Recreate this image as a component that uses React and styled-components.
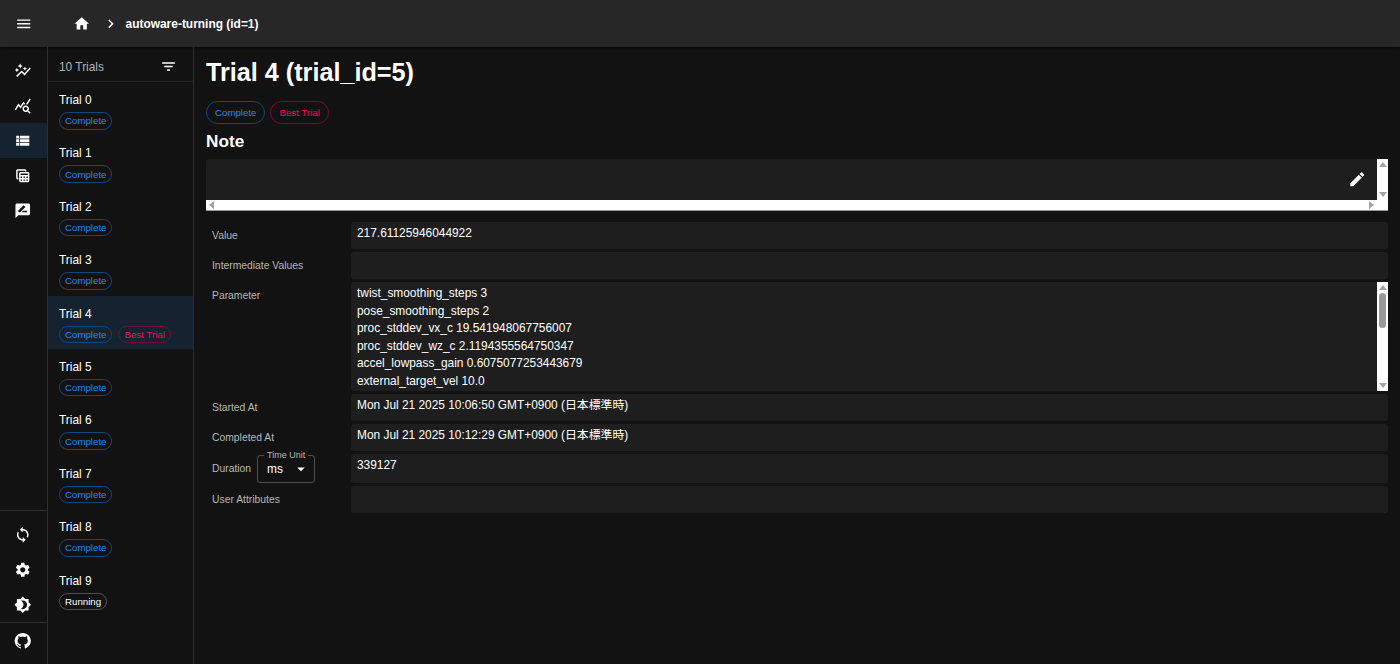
import React from "react";
import styled, { createGlobalStyle } from "styled-components";
import {
  MdAutoGraph,
  MdBrightness4,
  MdChevronRight,
  MdFilterList,
  MdHome,
  MdMenu,
  MdModeEdit,
  MdQueryStats,
  MdRateReview,
  MdSettings,
  MdSync,
  MdTableView,
  MdViewList,
  MdArrowDropDown,
} from "react-icons/md";

const GlobalStyle = createGlobalStyle`
  html, body {
    margin: 0;
    height: 100%;
    background: #121212;
  }
  body {
    font-family: "Liberation Sans", "Noto Sans CJK JP", sans-serif;
    font-size: 11.9px;
    color: #fff;
    overflow: hidden;
  }
  * { box-sizing: border-box; }
`;

const Page = styled.div`
  width: 1400px;
  height: 664px;
  display: flex;
  flex-direction: column;
`;

const AppBar = styled.header`
  height: 47px;
  flex: none;
  display: flex;
  align-items: center;
  background: #272727;
  box-shadow: 0 1px 3px rgba(0, 0, 0, 0.5);
  padding-left: 15px;
`;

const BarIcon = styled.span`
  display: inline-flex;
  color: #fff;
  font-size: ${(p) => p.$size || 17.5}px;
  margin-left: ${(p) => p.$left || 0}px;
`;

const AppTitle = styled.span`
  font-weight: 700;
  font-size: 11.95px;
  margin-left: 6px;
`;

const Body = styled.div`
  flex: 1;
  display: flex;
  min-height: 0;
`;

const SideNav = styled.nav`
  width: 48px;
  flex: none;
  display: flex;
  flex-direction: column;
  border-right: 1px solid #2e2e2e;
  padding-top: 6px;
`;

const NavGroup = styled.div`
  display: flex;
  flex-direction: column;
`;

const NavBottom = styled(NavGroup)`
  margin-top: auto;
  padding-bottom: 6px;
`;

const NavItem = styled.div`
  height: 35px;
  display: flex;
  align-items: center;
  justify-content: center;
  padding-right: 1px;
  color: #fff;
  font-size: 17.5px;
  background: ${(p) => (p.$active ? "#14232f" : "transparent")};
`;

const NavDivider = styled.div`
  height: 1px;
  background: #2e2e2e;
`;

const NavSpacedDivider = styled(NavDivider)`
  margin-bottom: 6px;
`;

const TrialList = styled.aside`
  width: 146px;
  flex: none;
  display: flex;
  flex-direction: column;
  border-right: 1px solid #2e2e2e;
`;

const ListHeader = styled.div`
  height: 35px;
  flex: none;
  display: flex;
  align-items: center;
  justify-content: space-between;
  padding: 5px 16px 0 11px;
  color: #a9b4bd;
  border-bottom: 1px solid #222;
  font-size: 11.9px;
`;

const FilterIcon = styled.span`
  display: inline-flex;
  color: #fff;
  font-size: 17px;
  margin-top: -1px;
`;

const TrialItem = styled.div`
  height: 53.4px;
  flex: none;
  padding: 11px 11px 0;
  background: ${(p) => (p.$active ? "#14232f" : "transparent")};
`;

const TrialName = styled.div`
  font-size: 11.9px;
  line-height: 14px;
  margin-bottom: 5px;
`;

const ChipRow = styled.div`
  display: flex;
  gap: ${(p) => p.$gap || 6}px;
  align-items: center;
`;

const TONES = {
  complete: { color: "#1f86f2", border: "#12477b" },
  best: { color: "#f50057", border: "#7b0a33" },
  running: { color: "#fff", border: "#505050" },
};

const Chip = styled.span`
  display: inline-flex;
  align-items: center;
  height: ${(p) => (p.$large ? 23 : 17.5)}px;
  padding: 0 ${(p) => (p.$large ? 8 : 5)}px;
  border-radius: 12px;
  font-size: 9.7px;
  white-space: nowrap;
  color: ${(p) => TONES[p.$tone].color};
  border: 1px solid ${(p) => TONES[p.$tone].border};
`;

const Main = styled.main`
  flex: 1;
  min-width: 0;
  padding: 10px 12px 0;
`;

const Title = styled.h1`
  margin: 0 0 13.5px;
  font-size: 25.2px;
  line-height: 30px;
  font-weight: 700;
`;

const SectionTitle = styled.h2`
  margin: 7.5px 0 6.5px;
  font-size: 17.2px;
  line-height: 21px;
  font-weight: 700;
`;

const NoteBox = styled.div`
  height: 52px;
  display: flex;
  flex-direction: column;
  margin-bottom: 11px;
`;

const NoteTop = styled.div`
  flex: 1;
  min-height: 0;
  display: flex;
`;

const NoteArea = styled.div`
  flex: 1;
  display: flex;
  justify-content: flex-end;
  align-items: flex-end;
  background: #1e1e1e;
  padding: 0 11px 11px 0;
  border-radius: 3px 0 0 0;
  font-size: 18.5px;
`;

const VBar = styled.div`
  width: 11px;
  flex: none;
  background: #fff;
  display: flex;
  flex-direction: column;
  align-items: center;
  justify-content: space-between;
  padding: 3px 0;
`;

const HBar = styled.div`
  height: 11px;
  flex: none;
  background: #fff;
  border-bottom: 1px solid #999;
  display: flex;
  align-items: center;
  justify-content: space-between;
  padding: 0 14px 0 3px;
`;

const Arrow = styled.span`
  width: 0;
  height: 0;
  border-style: solid;
  ${(p) =>
    ({
      up: "border-width: 0 4px 5px; border-color: transparent transparent #a3a3a3;",
      down: "border-width: 5px 4px 0; border-color: #a3a3a3 transparent transparent;",
      left: "border-width: 4px 5px 4px 0; border-color: transparent #a3a3a3 transparent transparent;",
      right: "border-width: 4px 0 4px 5px; border-color: transparent transparent transparent #a3a3a3;",
    })[p.$dir]}
`;

const Thumb = styled.span`
  width: 7px;
  height: 35px;
  border-radius: 4px;
  background: #999;
  margin: 3px 0 auto;
`;

const Rows = styled.div`
  display: flex;
  flex-direction: column;
  gap: 3px;
`;

const Row = styled.div`
  display: flex;
`;

const Label = styled.div`
  width: 145px;
  flex: none;
  padding-left: 6px;
  display: flex;
  align-items: ${(p) => (p.$top ? "flex-start" : "center")};
  padding-top: ${(p) => (p.$top ? 7 : 0)}px;
  font-size: 10.35px;
  line-height: 13px;
  color: #b7b7b7;
`;

const Value = styled.div`
  flex: 1;
  min-width: 0;
  height: ${(p) => p.$h || 27}px;
  background: #1e1e1e;
  border-radius: 3px;
  padding: 3.5px 6px;
  font-size: 11.9px;
  line-height: 17.6px;
  color: #fff;
`;

const ParamPanel = styled.div`
  flex: 1;
  min-width: 0;
  height: 109px;
  display: flex;
`;

const ParamText = styled.div`
  flex: 1;
  background: #1e1e1e;
  border-radius: 3px 0 0 3px;
  padding: 3.5px 6px;
  overflow: hidden;
  font-size: 11.9px;
  line-height: 17.6px;
`;

const DurationLabel = styled.div`
  width: 145px;
  flex: none;
  padding-left: 6px;
  display: flex;
  align-items: center;
  gap: 6px;
  font-size: 10.35px;
  color: #b7b7b7;
`;

const Select = styled.div`
  position: relative;
  width: 58px;
  height: 28px;
  margin-top: 1px;
  border: 1px solid #4d4d4d;
  border-radius: 3px;
  display: flex;
  align-items: center;
  justify-content: space-between;
  padding: 0 6px 0 9px;
  font-size: 11.9px;
  color: #fff;
`;

const SelectLegend = styled.span`
  position: absolute;
  top: -6px;
  left: 6px;
  padding: 0 3px;
  font-size: 9px;
  line-height: 10px;
  color: #b7b7b7;
  background: #121212;
  white-space: nowrap;
`;

const SelectArrow = styled.span`
  display: inline-flex;
  font-size: 18px;
  margin-right: -2px;
`;

const GitHubIcon = () => (
  <svg width="17.5" height="17.5" viewBox="0 0 24 24" fill="currentColor">
    <path d="M12 1.27a11 11 0 00-3.48 21.46c.55.09.73-.28.73-.55v-1.84c-3.03.64-3.67-1.46-3.67-1.46-.55-1.29-1.28-1.65-1.28-1.65-.92-.65.1-.65.1-.65 1.1 0 1.73 1.1 1.73 1.1.92 1.65 2.57 1.2 3.21.92a2 2 0 01.64-1.47c-2.47-.27-5.04-1.19-5.04-5.5 0-1.1.46-2.1 1.2-2.84a3.76 3.76 0 010-2.93s.91-.28 3.11 1.1c1.8-.49 3.7-.49 5.5 0 2.1-1.38 3.02-1.1 3.02-1.1a3.76 3.76 0 010 2.93c.83.74 1.2 1.74 1.2 2.94 0 4.21-2.57 5.13-5.04 5.4.45.37.82.92.82 2.02v3.03c0 .27.1.64.73.55A11 11 0 0012 1.27" />
  </svg>
);

const params = [
  "twist_smoothing_steps 3",
  "pose_smoothing_steps 2",
  "proc_stddev_vx_c 19.541948067756007",
  "proc_stddev_wz_c 2.1194355564750347",
  "accel_lowpass_gain 0.6075077253443679",
  "external_target_vel 10.0",
];

const trials = Array.from({ length: 10 }, (_, i) => ({
  name: `Trial ${i}`,
  running: i === 9,
  best: i === 4,
}));

export default function App() {
  return (
    <Page>
      <GlobalStyle />
      <AppBar>
        <BarIcon>
          <MdMenu />
        </BarIcon>
        <BarIcon $left={40}>
          <MdHome />
        </BarIcon>
        <BarIcon $left={12}>
          <MdChevronRight />
        </BarIcon>
        <AppTitle>autoware-turning (id=1)</AppTitle>
      </AppBar>
      <Body>
        <SideNav>
          <NavGroup>
            <NavItem>
              <MdAutoGraph />
            </NavItem>
            <NavItem>
              <MdQueryStats />
            </NavItem>
            <NavItem $active>
              <MdViewList />
            </NavItem>
            <NavItem>
              <MdTableView />
            </NavItem>
            <NavItem>
              <MdRateReview />
            </NavItem>
          </NavGroup>
          <NavBottom>
            <NavSpacedDivider />
            <NavItem>
              <MdSync />
            </NavItem>
            <NavItem>
              <MdSettings />
            </NavItem>
            <NavItem>
              <MdBrightness4 />
            </NavItem>
            <NavDivider />
            <NavItem>
              <GitHubIcon />
            </NavItem>
          </NavBottom>
        </SideNav>

        <TrialList>
          <ListHeader>
            <span>10 Trials</span>
            <FilterIcon>
              <MdFilterList />
            </FilterIcon>
          </ListHeader>
          {trials.map((t) => (
            <TrialItem key={t.name} $active={t.best}>
              <TrialName>{t.name}</TrialName>
              <ChipRow>
                <Chip $tone={t.running ? "running" : "complete"}>
                  {t.running ? "Running" : "Complete"}
                </Chip>
                {t.best && <Chip $tone="best">Best Trial</Chip>}
              </ChipRow>
            </TrialItem>
          ))}
        </TrialList>

        <Main>
          <Title>Trial 4 (trial_id=5)</Title>
          <ChipRow $gap={5}>
            <Chip $large $tone="complete">
              Complete
            </Chip>
            <Chip $large $tone="best">
              Best Trial
            </Chip>
          </ChipRow>
          <SectionTitle>Note</SectionTitle>
          <NoteBox>
            <NoteTop>
              <NoteArea>
                <MdModeEdit />
              </NoteArea>
              <VBar>
                <Arrow $dir="up" />
                <Arrow $dir="down" />
              </VBar>
            </NoteTop>
            <HBar>
              <Arrow $dir="left" />
              <Arrow $dir="right" />
            </HBar>
          </NoteBox>

          <Rows>
            <Row>
              <Label>Value</Label>
              <Value>217.61125946044922</Value>
            </Row>
            <Row>
              <Label>Intermediate Values</Label>
              <Value />
            </Row>
            <Row>
              <Label $top>Parameter</Label>
              <ParamPanel>
                <ParamText>
                  {params.map((p) => (
                    <div key={p}>{p}</div>
                  ))}
                </ParamText>
                <VBar>
                  <Arrow $dir="up" />
                  <Thumb />
                  <Arrow $dir="down" />
                </VBar>
              </ParamPanel>
            </Row>
            <Row>
              <Label>Started At</Label>
              <Value>Mon Jul 21 2025 10:06:50 GMT+0900 (日本標準時)</Value>
            </Row>
            <Row>
              <Label>Completed At</Label>
              <Value>Mon Jul 21 2025 10:12:29 GMT+0900 (日本標準時)</Value>
            </Row>
            <Row>
              <DurationLabel>
                Duration
                <Select>
                  <SelectLegend>Time Unit</SelectLegend>
                  ms
                  <SelectArrow>
                    <MdArrowDropDown />
                  </SelectArrow>
                </Select>
              </DurationLabel>
              <Value $h={29}>339127</Value>
            </Row>
            <Row>
              <Label>User Attributes</Label>
              <Value />
            </Row>
          </Rows>
        </Main>
      </Body>
    </Page>
  );
}
